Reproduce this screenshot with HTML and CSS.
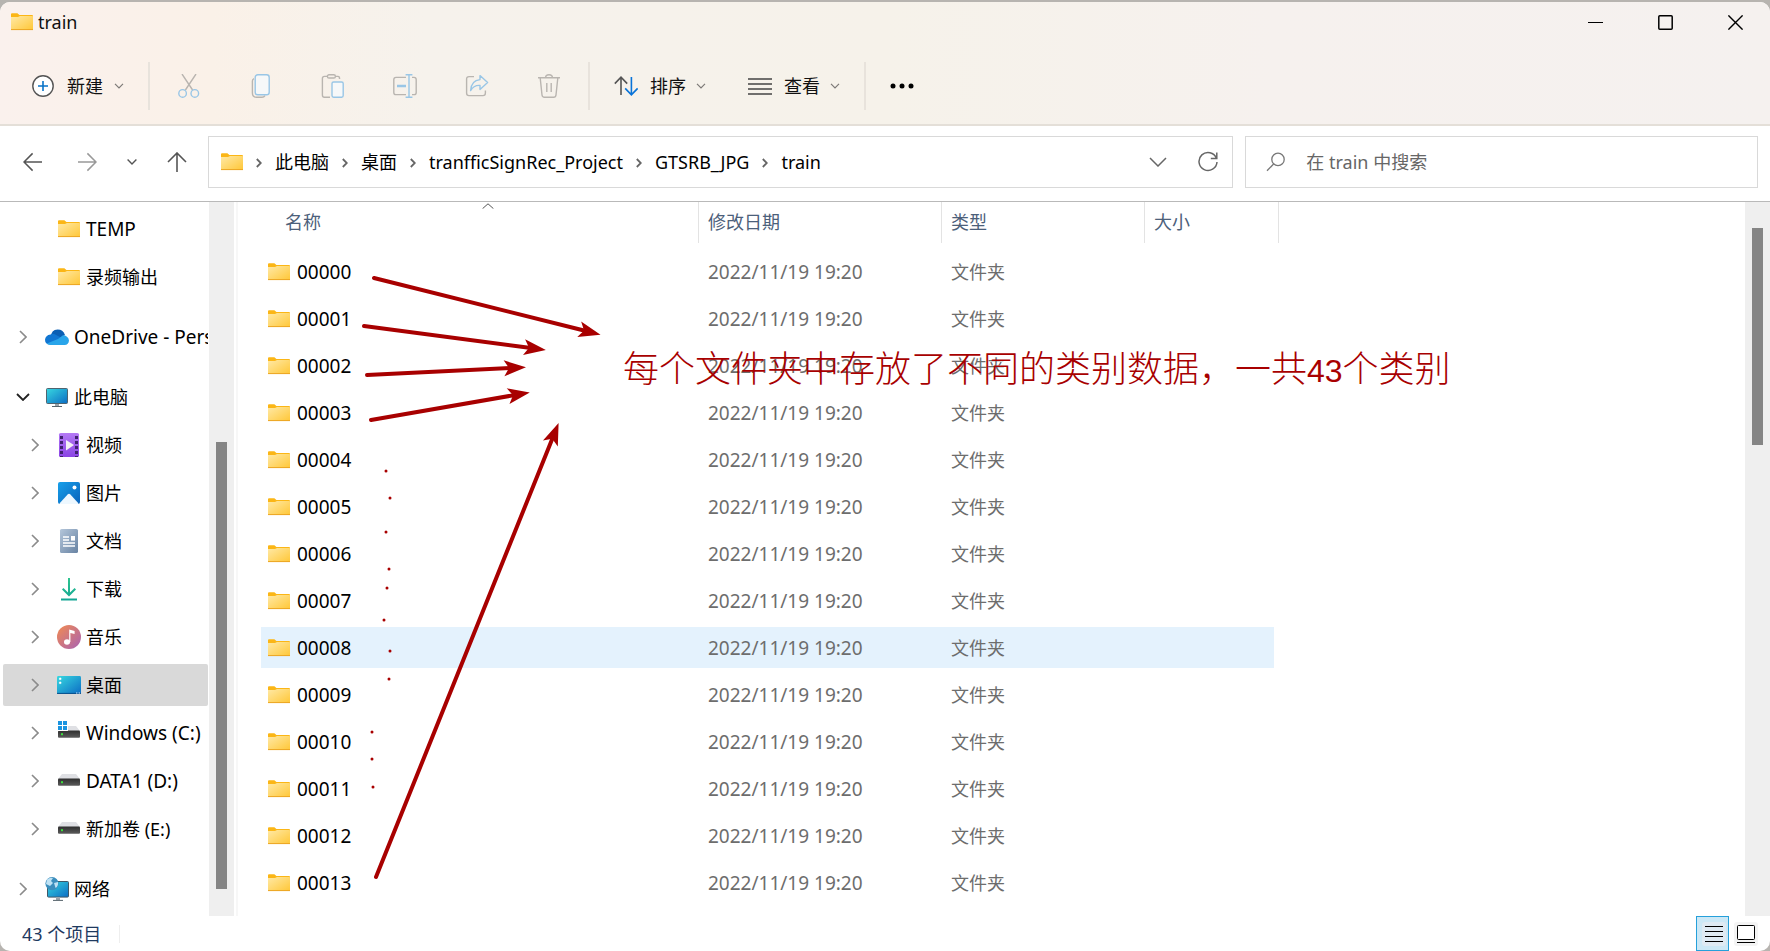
FILE: index.html
```html
<!DOCTYPE html>
<html lang="zh-CN">
<head>
<meta charset="utf-8">
<title>train</title>
<link rel="stylesheet" href="styles.css">
</head>
<body>
<svg class="defs" aria-hidden="true">
  <defs>
    <linearGradient id="gFolder" x1="0" y1="0" x2="1" y2="1"><stop offset="0" stop-color="#ffe9a6"/><stop offset="1" stop-color="#ffc737"/></linearGradient>
    <linearGradient id="gScreen" x1="0" y1="0" x2="1" y2="1"><stop offset="0" stop-color="#37d8e0"/><stop offset="1" stop-color="#0c6cc4"/></linearGradient>
    <linearGradient id="gVideo" x1="0" y1="0" x2="0" y2="1"><stop offset="0" stop-color="#b47af5"/><stop offset="1" stop-color="#8a44e4"/></linearGradient>
    <linearGradient id="gPic" x1="0" y1="0" x2="1" y2="1"><stop offset="0" stop-color="#17a0ea"/><stop offset="1" stop-color="#0a62ba"/></linearGradient>
    <linearGradient id="gDoc" x1="0" y1="0" x2="1" y2="1"><stop offset="0" stop-color="#b4c6da"/><stop offset="1" stop-color="#6883a3"/></linearGradient>
    <linearGradient id="gDown" x1="0" y1="0" x2="0" y2="1"><stop offset="0" stop-color="#2fc58f"/><stop offset="1" stop-color="#12a594"/></linearGradient>
    <linearGradient id="gMusic" x1="0" y1="0" x2="1" y2="1"><stop offset="0" stop-color="#f28b50"/><stop offset="1" stop-color="#a862b4"/></linearGradient>
    <linearGradient id="gDisk" x1="0" y1="0" x2="0" y2="1"><stop offset="0" stop-color="#2e2e2e"/><stop offset="1" stop-color="#5c5c5c"/></linearGradient>
    <symbol id="folder" viewBox="0 0 22 18">
      <path d="M0 1.2Q0 .2 1 .2H6.4L8.4 2H21Q22 2 22 3V6H0Z" fill="#fbb616"/>
      <path d="M0 4H7L9 3H21.4Q22 3 22 3.6V16.4Q22 17 21.4 17H.6Q0 17 0 16.4Z" fill="url(#gFolder)"/>
      <path d="M0 16.6H22" stroke="#eca523"/>
    </symbol>
    <symbol id="chev-r" viewBox="0 0 8 14"><path d="M1 1L7 7L1 13" fill="none" stroke="#8b8b8b" stroke-width="1.6"/></symbol>
    <symbol id="crumb-r" viewBox="0 0 6 10"><path d="M.8 1L4.8 5L.8 9" fill="none" stroke="#666" stroke-width="1.8"/></symbol>
    <symbol id="chev-d" viewBox="0 0 10 6"><path d="M1 .8L5 4.8L9 .8" fill="none" stroke="#7d7a77" stroke-width="1.2"/></symbol>
    <symbol id="disk" viewBox="0 0 22 12">
      <path d="M4 0H18L22 5H0Z" fill="#dfe0e4"/><rect y="4.6" width="22" height="7.2" rx="1" fill="url(#gDisk)"/><rect x="3" y="7.2" width="2" height="2" fill="#3be03b"/>
    </symbol>
  </defs>
</svg>

<div class="window">
  <header class="ribbon">
    <div class="titlebar">
      <svg class="ic-folder"><use href="#folder"/></svg>
      <h1 class="title">train</h1>
      <div class="win-buttons">
        <button aria-label="最小化"><svg width="15" height="15"><path d="M0 7.5H15" stroke="#000"/></svg></button>
        <button aria-label="最大化"><svg width="15" height="15"><rect x=".8" y=".8" width="13.4" height="13.4" rx="1" fill="none" stroke="#000" stroke-width="1.5"/></svg></button>
        <button aria-label="关闭"><svg width="15" height="15"><path d="M.4 .4L14.6 14.6M14.6 .4L.4 14.6" stroke="#000" stroke-width="1.4"/></svg></button>
      </div>
    </div>
    <div class="toolbar" role="toolbar" aria-label="命令栏">
      <button class="cmd cmd-new">
        <svg width="22" height="22" fill="none"><circle cx="11" cy="11" r="10.2" fill="#fff" stroke="#555" stroke-width="1.4"/><path d="M11 6V16M6 11H16" stroke="#0873c8" stroke-width="1.6"/></svg>
        <span>新建</span><svg class="tiny"><use href="#chev-d"/></svg>
      </button>
      <div class="group">
        <button class="tool" aria-label="剪切"><svg width="24" height="24" fill="none" stroke-width="1.4"><path d="M5 0L15.6 16M19 0L8.4 16" stroke="#b9b5b0"/><circle cx="5.6" cy="19.4" r="3.8" stroke="#99c6e6"/><circle cx="17.8" cy="19.4" r="3.8" stroke="#99c6e6"/></svg></button>
        <button class="tool" aria-label="复制"><svg width="24" height="24" fill="none" stroke-width="1.4"><path d="M5 4.6Q3.4 5.2 3.4 7V19Q3.4 23.2 7.6 23.2H13Q15 23.2 16 21.6" stroke="#b9b5b0"/><rect x="6.2" y=".8" width="14" height="20" rx="2.6" fill="#f6f8f9" stroke="#99c6e6"/></svg></button>
        <button class="tool" aria-label="粘贴"><svg width="24" height="24" fill="none" stroke-width="1.4"><path d="M7 2.4H3.4Q1.4 2.4 1.4 4.4V21Q1.4 23.2 3.4 23.2H9M14 2.4H17Q18.6 2.4 18.6 5" stroke="#b9b5b0"/><rect x="6.4" y=".8" width="8" height="3.2" rx="1.6" stroke="#b9b5b0"/><rect x="11" y="8" width="11.2" height="15.2" rx="1.6" fill="#f6f8f9" stroke="#99c6e6"/></svg></button>
        <button class="tool" aria-label="重命名"><svg width="24" height="24" fill="none" stroke-width="1.4"><path d="M13 3.4H3Q.8 3.4 .8 5.6V18.4Q.8 20.6 3 20.6H13M19 3.4H21Q23.2 3.4 23.2 5.6V18.4Q23.2 20.6 21 20.6H19" stroke="#b9b5b0"/><path d="M12.6 .8H19.4M12.6 23.2H19.4M16 .8V23.2" stroke="#99c6e6"/><path d="M4 12H13" stroke="#99c6e6" stroke-width="2.6"/></svg></button>
        <button class="tool" aria-label="共享"><svg width="24" height="24" fill="none" stroke-width="1.4"><path d="M9 2.6H4Q1.6 2.6 1.6 5V19Q1.6 21.6 4 21.6H18Q20.4 21.6 20.4 19V16.6" stroke="#b9b5b0"/><path d="M15 1.6L22.6 8.6L15 15.4V11.4Q8.6 11 5.6 16.6Q6.2 6.4 15 5.6Z" stroke="#99c6e6" stroke-linejoin="round"/></svg></button>
        <button class="tool" aria-label="删除"><svg width="24" height="24" fill="none" stroke="#b9b5b0" stroke-width="1.4"><path d="M1 3.8H23M8.6 3.8Q8.6 .8 12 .8T15.4 3.8M3.2 4L5 21Q5.2 23.2 7.4 23.2H16.6Q18.8 23.2 19 21L20.8 4M9.8 9V18M14.2 9V18"/></svg></button>
      </div>
      <div class="group group-text">
        <button class="cmd"><svg width="24" height="20" fill="none" stroke-width="1.6"><path d="M7 19V1.4M.8 7.6L7 1.2L13.2 7.6" stroke="#555"/><path d="M17.4 1V18.6M11.2 12.4L17.4 18.8L23.6 12.4" stroke="#0873d8"/></svg><span>排序</span><svg class="tiny"><use href="#chev-d"/></svg></button>
        <button class="cmd"><svg width="24" height="18"><path d="M0 2H24M0 7H24M0 12H24M0 17H24" stroke="#444" stroke-width="1.4"/></svg><span>查看</span><svg class="tiny"><use href="#chev-d"/></svg></button>
      </div>
      <button class="cmd" aria-label="查看更多"><svg width="24" height="6"><circle cx="3" cy="3" r="2.5"/><circle cx="12" cy="3" r="2.5"/><circle cx="21" cy="3" r="2.5"/></svg></button>
    </div>
  </header>

  <div class="navbar">
    <div class="nav-buttons">
      <button aria-label="后退"><svg width="20" height="20" fill="none" stroke="#555" stroke-width="1.5"><path d="M1 10H19M9.6 1.4L1 10L9.6 18.6"/></svg></button>
      <button aria-label="前进"><svg width="20" height="20" fill="none" stroke="#999" stroke-width="1.5"><path d="M1 10H19M10.4 1.4L19 10L10.4 18.6"/></svg></button>
      <button aria-label="最近浏览的位置"><svg width="10" height="6" fill="none" stroke="#555" stroke-width="1.4"><path d="M.6 .6L5 5L9.4 .6"/></svg></button>
      <button aria-label="上移"><svg width="20" height="20" fill="none" stroke="#555" stroke-width="1.6"><path d="M10 1V20M1 10L10 1L19 10"/></svg></button>
    </div>
    <nav class="address" aria-label="地址">
      <svg class="ic-folder"><use href="#folder"/></svg>
      <svg class="sep"><use href="#crumb-r"/></svg><a href="#">此电脑</a>
      <svg class="sep"><use href="#crumb-r"/></svg><a href="#">桌面</a>
      <svg class="sep"><use href="#crumb-r"/></svg><a href="#">tranfficSignRec_Project</a>
      <svg class="sep"><use href="#crumb-r"/></svg><a href="#">GTSRB_JPG</a>
      <svg class="sep"><use href="#crumb-r"/></svg><a href="#">train</a>
      <button class="drop" aria-label="历史记录"><svg width="18" height="10" fill="none" stroke="#666" stroke-width="1.5"><path d="M1 1L9 9L17 1"/></svg></button>
      <button aria-label="刷新"><svg width="20" height="22" fill="none" stroke="#666" stroke-width="1.5"><path d="M18.4 7.2A9 9 0 1 0 19 11M18.8 1.4V7.4H12.8"/></svg></button>
    </nav>
    <label class="search">
      <svg width="20" height="20" fill="none" stroke="#777" stroke-width="1.3"><circle cx="12" cy="7.4" r="6.2"/><path d="M7.6 12L1 18.8"/></svg>
      <input type="text" placeholder="在 train 中搜索" aria-label="在 train 中搜索">
    </label>
  </div>

  <main class="main">
    <div class="sidebar">
      <ul class="tree">
        <li class="node child"><svg class="ic-folder"><use href="#folder"/></svg><a class="latin" href="#">TEMP</a></li>
        <li class="node child"><svg class="ic-folder"><use href="#folder"/></svg><a href="#">录频输出</a></li>
        <li class="node root"><svg class="arrow"><use href="#chev-r"/></svg>
          <svg class="ic" viewBox="0 0 24 24"><path d="M6 12Q6 5 12.6 4.6Q18 4.6 20 10L12 15Z" fill="#0b5fb4"/><path d="M5 19.6Q0 19.4 0 14.8Q.4 10 5.6 9.4Q8.6 7.8 12 10.4L19 14L10 20Z" fill="#1176d2"/><path d="M13 14L16.4 11.4Q18.4 9.4 21 11Q24 12.6 24 15.6Q23.6 20 19.6 20H5Q3 20 1.8 18.6Z" fill="#29a5ea"/></svg>
          <a class="latin" href="#">OneDrive - Personal</a></li>
        <li class="node root"><svg class="arrow-open" fill="none" stroke="#222" stroke-width="1.8"><path d="M1 1L7 7L13 1"/></svg>
          <svg class="ic" viewBox="0 0 24 24"><rect x="1.5" y="3.5" width="21" height="15" rx="1" fill="url(#gScreen)" stroke="#4f6470"/><path d="M10 19H14V21H10Z" fill="#9aa4ab"/><path d="M7 21.5H17" stroke="#56636b"/></svg>
          <a href="#">此电脑</a></li>
        <li class="node child"><svg class="arrow"><use href="#chev-r"/></svg>
          <svg class="ic" viewBox="0 0 24 24"><rect x="2" width="20" height="24" rx="1.6" fill="url(#gVideo)"/><path d="M4.5 3V24M19.5 3V24" stroke="#40226e" stroke-width="3" stroke-dasharray="3 2"/><path d="M9 7L17 12L9 17.4Z" fill="#f4f0f4"/></svg>
          <a href="#">视频</a></li>
        <li class="node child"><svg class="arrow"><use href="#chev-r"/></svg>
          <svg class="ic" viewBox="0 0 24 24"><rect x="1" y="1" width="22" height="22" rx="2" fill="url(#gPic)"/><path d="M2.4 22.4L10.6 13.4Q12 12 13.4 13.4L21.6 22.4Q21 23 20 23H4Q3 23 2.4 22.4Z" fill="#eef8ff"/><circle cx="17.5" cy="6.4" r="2" fill="#fff"/></svg>
          <a href="#">图片</a></li>
        <li class="node child"><svg class="arrow"><use href="#chev-r"/></svg>
          <svg class="ic" viewBox="0 0 24 24"><rect x="3" width="18" height="24" rx="1.6" fill="url(#gDoc)"/><path d="M6 8H12M6 11H12M6 14H18M6 17H18" stroke="#fff" stroke-width="1.4"/><rect x="14" y="7" width="4" height="4.6" fill="#fff"/></svg>
          <a href="#">文档</a></li>
        <li class="node child"><svg class="arrow"><use href="#chev-r"/></svg>
          <svg class="ic" viewBox="0 0 24 24"><path d="M11 1H13V15.4L17.6 11L19 12.4L12 19.4L5 12.4L6.4 11L11 15.4ZM4 21.6H20V23.4H4Z" fill="url(#gDown)"/></svg>
          <a href="#">下载</a></li>
        <li class="node child"><svg class="arrow"><use href="#chev-r"/></svg>
          <svg class="ic" viewBox="0 0 24 24"><circle cx="12" cy="12" r="12" fill="url(#gMusic)"/><ellipse cx="10" cy="17" rx="3" ry="2.8" fill="#fff"/><path d="M12.2 17V4.4L17.6 6V9L13.4 8V17Z" fill="#fff"/></svg>
          <a href="#">音乐</a></li>
        <li class="node child selected"><svg class="arrow"><use href="#chev-r"/></svg>
          <svg class="ic" viewBox="0 0 24 24"><rect y="3" width="24" height="18" rx="1.4" fill="url(#gScreen)"/><path d="M2.4 5H4V6.6H2.4ZM2.4 9H4V10.6H2.4Z" fill="#fff" stroke="#fff" stroke-width=".6"/><path d="M0 20.4H24" stroke="#0a4f8a"/><path d="M19 20H20.4M21.6 20H23" stroke="#cfe8ff"/></svg>
          <a href="#">桌面</a></li>
        <li class="node child"><svg class="arrow"><use href="#chev-r"/></svg>
          <svg class="ic" viewBox="0 0 24 24"><use href="#disk" x="1" y="5" width="22" height="12"/><rect width="11" height="10" fill="#fff"/><path d="M1 0H5V4H1ZM6 0H10V4H6ZM1 5H5V9H1ZM6 5H10V9H6Z" fill="#1a94e0"/></svg>
          <a class="latin" href="#">Windows (C:)</a></li>
        <li class="node child"><svg class="arrow"><use href="#chev-r"/></svg>
          <svg class="ic" viewBox="0 0 24 24"><use href="#disk" x="1" y="5" width="22" height="12"/></svg>
          <a class="latin" href="#">DATA1 (D:)</a></li>
        <li class="node child"><svg class="arrow"><use href="#chev-r"/></svg>
          <svg class="ic" viewBox="0 0 24 24"><use href="#disk" x="1" y="5" width="22" height="12"/></svg>
          <a href="#">新加卷 (E:)</a></li>
        <li class="node root"><svg class="arrow"><use href="#chev-r"/></svg>
          <svg class="ic" viewBox="0 0 24 24"><rect x="2.5" y="4.5" width="21" height="15.6" rx="1" fill="url(#gScreen)" stroke="#3f5868"/><path d="M11 20H15V23H11Z" fill="#9aa4ab"/><path d="M8 23.4H18" stroke="#56636b"/><circle cx="7" cy="6.6" r="6.6" fill="#3c8ebd"/><path d="M2 2.6Q5 0 8 1L6 4L8 6L5 9L1 7ZM9 6L13 5Q13.6 9 10.6 11Z" fill="#bfe2f4"/></svg>
          <a href="#">网络</a></li>
      </ul>
      <div class="scrollbar"><div class="thumb thumb-tree"></div></div>
    </div>

    <div class="content">
      <table class="files">
        <colgroup><col class="c-name"><col class="c-date"><col class="c-type"><col class="c-size"></colgroup>
        <thead>
          <tr>
            <th scope="col"><div class="head head-name">名称<svg class="caret" fill="none" stroke="#555"><path d="M.6 5.6L6 .8L11.4 5.6"/></svg></div></th>
            <th scope="col"><div class="head">修改日期</div></th>
            <th scope="col"><div class="head">类型</div></th>
            <th scope="col"><div class="head">大小</div></th>
          </tr>
        </thead>
        <tbody>
          <tr><td class="name"><svg class="ic-folder"><use href="#folder"/></svg>00000</td><td class="date">2022/11/19 19:20</td><td>文件夹</td><td></td></tr>
          <tr><td class="name"><svg class="ic-folder"><use href="#folder"/></svg>00001</td><td class="date">2022/11/19 19:20</td><td>文件夹</td><td></td></tr>
          <tr><td class="name"><svg class="ic-folder"><use href="#folder"/></svg>00002</td><td class="date">2022/11/19 19:20</td><td>文件夹</td><td></td></tr>
          <tr><td class="name"><svg class="ic-folder"><use href="#folder"/></svg>00003</td><td class="date">2022/11/19 19:20</td><td>文件夹</td><td></td></tr>
          <tr><td class="name"><svg class="ic-folder"><use href="#folder"/></svg>00004</td><td class="date">2022/11/19 19:20</td><td>文件夹</td><td></td></tr>
          <tr><td class="name"><svg class="ic-folder"><use href="#folder"/></svg>00005</td><td class="date">2022/11/19 19:20</td><td>文件夹</td><td></td></tr>
          <tr><td class="name"><svg class="ic-folder"><use href="#folder"/></svg>00006</td><td class="date">2022/11/19 19:20</td><td>文件夹</td><td></td></tr>
          <tr><td class="name"><svg class="ic-folder"><use href="#folder"/></svg>00007</td><td class="date">2022/11/19 19:20</td><td>文件夹</td><td></td></tr>
          <tr class="hover"><td class="name"><svg class="ic-folder"><use href="#folder"/></svg>00008</td><td class="date">2022/11/19 19:20</td><td>文件夹</td><td></td></tr>
          <tr><td class="name"><svg class="ic-folder"><use href="#folder"/></svg>00009</td><td class="date">2022/11/19 19:20</td><td>文件夹</td><td></td></tr>
          <tr><td class="name"><svg class="ic-folder"><use href="#folder"/></svg>00010</td><td class="date">2022/11/19 19:20</td><td>文件夹</td><td></td></tr>
          <tr><td class="name"><svg class="ic-folder"><use href="#folder"/></svg>00011</td><td class="date">2022/11/19 19:20</td><td>文件夹</td><td></td></tr>
          <tr><td class="name"><svg class="ic-folder"><use href="#folder"/></svg>00012</td><td class="date">2022/11/19 19:20</td><td>文件夹</td><td></td></tr>
          <tr><td class="name"><svg class="ic-folder"><use href="#folder"/></svg>00013</td><td class="date">2022/11/19 19:20</td><td>文件夹</td><td></td></tr>
        </tbody>
      </table>
      <svg class="arrows" viewBox="238 202 400 714" fill="none" stroke="#a80000" stroke-width="4" stroke-linecap="round" aria-hidden="true">
        <defs><marker id="head" markerUnits="userSpaceOnUse" markerWidth="24" markerHeight="18" refX="7" refY="8" orient="auto" overflow="visible"><path d="M22 8L0 0L5 8L0 16Z" fill="#a80000" stroke="none"/></marker></defs>
        <path marker-end="url(#head)" d="M374 278L586 331"/>
        <path marker-end="url(#head)" d="M364 326L531 348"/>
        <path marker-end="url(#head)" d="M367 375L511 368"/>
        <path marker-end="url(#head)" d="M371 420L515 395"/>
        <path marker-end="url(#head)" d="M376 877L553 437"/>
        <path stroke-width="3" d="M386 471h0M390 498h0M386 532h0M389 569h0M387 588h0M384 620h0M390 651h0M389 679h0M372 732h0M372 759h0M373 787h0"/>
      </svg>
      <p class="note">每个文件夹中存放了不同的类别数据，一共<span class="count">43</span>个类别</p>
      <div class="scrollbar scrollbar-list"><div class="thumb thumb-list"></div></div>
    </div>
  </main>

  <footer class="status">
    <span class="total">43 个项目</span>
    <div class="views">
      <button class="active" aria-label="详细信息"><svg width="24" height="24"><rect width="24" height="24" rx="3" fill="#dfeaf3"/><path d="M3 4.5H21M3 9.5H21M3 14.5H21M3 19.5H21" stroke="#000"/></svg></button>
      <button aria-label="大缩略图"><svg width="24" height="24"><rect width="24" height="24" rx="3" fill="#f4f4f4"/><rect x="3.5" y="3.5" width="17" height="14" rx="1" fill="#fff" stroke="#000"/><path d="M3 20.5H21" stroke="#000"/></svg></button>
    </div>
  </footer>
</div>
</body>
</html>
```

FILE: styles.css
```css
* { box-sizing: border-box; }

html, body { height: 100%; }

body {
  margin: 0;
  padding-top: 2px;
  overflow: hidden;
  background: #b7b4b0;
  color: #111;
  font: 18px/24px "Noto Sans", "Noto Sans CJK SC", sans-serif;
}

button {
  display: flex;
  align-items: center;
  justify-content: center;
  padding: 0;
  border: 0;
  background: none;
  color: inherit;
  font: inherit;
}

a { color: inherit; text-decoration: none; }
svg { display: block; flex: none; }

.defs { position: absolute; width: 0; height: 0; }
.latin, .name, .date { font-size: 19px; }
.ic-folder { width: 22px; height: 18px; }
.ic { width: 24px; height: 24px; }

.window {
  display: flex;
  flex-direction: column;
  height: 100%;
  overflow: hidden;
  border-radius: 10px;
  background: #fff;
}

/* Title and commands */
.ribbon {
  border-bottom: 2px solid #e4dfd8;
  background: linear-gradient(90deg, #faf1ed 0, #faf1e8 12%, #f6f2ec 24%, #f6f2ea 50%, #f6f1ee 72%, #f5f1ef 100%);
}

.titlebar { display: flex; align-items: center; height: 40px; padding-left: 11px; }
.title { margin: 0 0 0 5px; font-size: 18px; font-weight: 400; }
.win-buttons { display: flex; margin-left: auto; }
.win-buttons button { width: 70px; height: 40px; }

.toolbar { display: flex; align-items: center; height: 82px; padding: 6px 0 0 32px; }
.cmd { gap: 12px; height: 48px; }
.cmd-new { gap: 13px; padding-right: 24px; }
.cmd span { margin-right: -2px; }
.tiny { width: 10px; height: 6px; }
.group {
  display: flex;
  align-items: center;
  gap: 48px;
  height: 48px;
  padding: 0 27px;
  border-left: 2px solid #e8e3dc;
  border-right: 2px solid #e8e3dc;
}
.group-text { gap: 42px; margin-right: 24px; padding: 0 24px; border-left: 0; }

/* Navigation */
.navbar {
  display: grid;
  grid-template-columns: 173px 2fr 1fr;
  gap: 12px;
  padding: 10px 12px 13px 23px;
  border-bottom: 1px solid #b9b9b9;
}
.nav-buttons { display: flex; align-items: center; gap: 30px; }
.nav-buttons button:first-child { margin-right: 4px; }
.address, .search {
  display: flex;
  align-items: center;
  height: 52px;
  min-width: 0;
  border: 1px solid #d9d9d9;
}
.address { padding: 0 14px 0 12px; color: #000; }
.address a { white-space: nowrap; }
.sep { width: 6px; height: 10px; margin: 2px 13px 0; }
.drop { margin-left: auto; margin-right: 31px; }
.search { gap: 20px; padding-left: 20px; }
.search input {
  flex: 1;
  min-width: 0;
  padding: 0;
  border: 0;
  outline: 0;
  background: none;
  font: inherit;
}
.search input::placeholder { color: #666; opacity: 1; }

/* Body */
.main { display: flex; flex: 1; min-height: 0; }
.sidebar { display: flex; width: 238px; border-right: 2px solid #f7f7f7; }
.tree {
  display: flex;
  flex: 1;
  flex-direction: column;
  min-width: 0;
  margin: 0;
  padding: 3px 1px 0 3px;
  overflow: hidden;
  list-style: none;
  color: #000;
}
.node {
  display: flex;
  flex: none;
  align-items: center;
  gap: 5px;
  height: 42px;
  margin: 3px 0;
  overflow: hidden;
  border-radius: 2px;
  white-space: nowrap;
}
.root { margin-top: 15px; padding-left: 16px; }
.child { padding-left: 28px; }
.child > .ic-folder { margin: 0 1px 0 27px; }
.arrow { width: 8px; height: 14px; margin-right: 13px; }
.arrow-open { width: 14px; height: 8px; margin: 0 10px 0 -3px; }
.selected { background: #d9d9d9; }

.scrollbar { width: 25px; margin-right: 2px; padding: 0 7px; background: #efefef; }
.thumb { background: #858585; }
.thumb-tree { height: 447px; margin-top: 240px; }

.content { position: relative; display: flex; flex: 1; min-width: 0; padding-left: 23px; }
.scrollbar-list { flex: none; margin: 0 0 0 auto; }
.thumb-list { width: 11px; height: 217px; margin-top: 26px; }

.files {
  flex: none;
  align-self: flex-start;
  width: 1018px;
  table-layout: fixed;
  border-collapse: separate;
  border-spacing: 0;
  color: #6d6d6d;
}
.c-name { width: 438px; }
.c-date { width: 243px; }
.c-type { width: 203px; }
.c-size { width: 134px; }
.files th { height: 46px; padding: 0; vertical-align: top; text-align: left; font-weight: 400; }
.head {
  height: 41px;
  padding: 8px 9px;
  border-right: 1px solid #e3e3e3;
  color: #4c607a;
}
.head-name { position: relative; padding-left: 24px; }
.caret { position: absolute; top: 1px; left: 221px; width: 12px; height: 6px; }
.files td {
  height: 47px;
  padding: 0 9px;
  border: solid transparent;
  border-width: 3px 0;
  background-clip: padding-box;
}
.files td:last-child { border-right-width: 5px; }
.files .name { padding-left: 36px; color: #000; }
.name .ic-folder { float: left; margin: 3px 0 0 -29px; }
.hover td { background-color: #e4f2fd; }

/* Hand-drawn notes over the list */
.arrows { position: absolute; top: 0; left: 0; width: 400px; height: 714px; pointer-events: none; }
.note {
  position: absolute;
  top: 138px;
  left: 385px;
  margin: 0;
  color: #a80000;
  font: 300 36px/52px "Noto Sans CJK SC", sans-serif;
  white-space: nowrap;
}
.count { font-family: "Liberation Sans", sans-serif; font-size: 32px; font-weight: 400; }

/* Status */
.status { display: flex; align-items: center; height: 35px; padding: 0 12px 0 22px; color: #1f3a5f; }
.total { padding-right: 18px; border-right: 1px solid #eee; line-height: 18px; }
.views { display: flex; align-items: center; align-self: stretch; gap: 5px; margin-left: auto; }
.views button { width: 24px; height: 35px; }
.views .active { width: 33px; padding-left: 2px; border: 1px solid #26a0da; background: #cce8f6; }
```
